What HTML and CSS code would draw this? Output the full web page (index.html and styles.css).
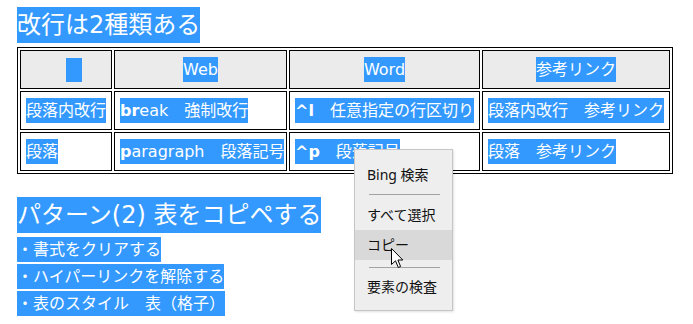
FILE: index.html
```html
<!DOCTYPE html>
<html lang="ja">
<head>
<meta charset="utf-8">
<link rel="stylesheet" href="styles.css">
</head>
<body>
<div class="page">
  <h1 class="title"><span class="sel">改行は2種類ある</span></h1>
  <table class="grid">
    <tr>
      <th class="c1"><span class="sel blank"></span></th>
      <th class="c2"><span class="sel">Web</span></th>
      <th class="c3"><span class="sel">Word</span></th>
      <th class="c4"><span class="sel">参考リンク</span></th>
    </tr>
    <tr>
      <td><span class="sel">段落内改行</span></td>
      <td><span class="sel"><b>br</b>eak　強制改行</span></td>
      <td><span class="sel"><b>^l</b>　任意指定の行区切り</span></td>
      <td><span class="sel">段落内改行　参考リンク</span></td>
    </tr>
    <tr>
      <td><span class="sel">段落</span></td>
      <td><span class="sel"><b>p</b>aragraph　段落記号</span></td>
      <td><span class="sel"><b>^p</b>　段落記号</span></td>
      <td><span class="sel">段落　参考リンク</span></td>
    </tr>
  </table>
  <h2 class="title title2"><span class="sel">パターン(2) 表をコピペする</span></h2>
  <ul class="steps">
    <li><span class="sel">・書式をクリアする</span></li>
    <li><span class="sel">・ハイパーリンクを解除する</span></li>
    <li><span class="sel">・表のスタイル　表（格子）</span></li>
  </ul>
</div>
<div class="menu">
  <div class="item">Bing 検索</div>
  <div class="sep"></div>
  <div class="item">すべて選択</div>
  <div class="item hot">コピー</div>
  <div class="sep sep2"></div>
  <div class="item">要素の検査</div>
</div>
<svg class="cursor" width="13" height="21" viewBox="0 0 13 21"><path d="M0.5 0.5 V16.5 L4.5 12.8 L7.3 19.5 L9.6 18.5 L6.9 12 H11.8 Z" fill="#fff" stroke="#000" stroke-width="1" stroke-linejoin="miter"/></svg>
</body>
</html>
```
FILE: styles.css
```css
body {
  margin: 0;
  background: #fff;
  color: #000;
  font-family: "DejaVu Sans", "Noto Sans CJK JP", sans-serif;
}
.page {
  padding: 7px 0 0 17px;
}
.title {
  margin: 0;
  font-size: 24px;
  line-height: 36px;
  font-weight: normal;
}
.sel {
  background: #3399ff;
  color: #fff;
  padding: 3px 0;
}
.title .sel {
  padding: 4px 0;
}
.grid {
  margin-top: 4px;
  border: 1px solid #000;
  border-spacing: 2px;
  table-layout: fixed;
  width: 656px;
  font-size: 16px;
}
.grid td,
.grid th {
  border: 1px solid #000;
  height: 39px;
  box-sizing: border-box;
  padding: 0 4px 0 5px;
  vertical-align: middle;
  text-align: left;
  font-weight: normal;
  line-height: 24px;
  white-space: nowrap;
}
.grid th {
  background: #ebebeb;
  text-align: center;
  padding: 0;
}
.grid b {
  font-weight: bold;
}
.blank {
  display: inline-block;
  vertical-align: middle;
  width: 16px;
  height: 24px;
  padding: 0;
  margin-left: 16px;
}
.c1 { width: 92px; }
.c2 { width: 173px; }
.c3 { width: 191px; }
.c4 { width: 188px; }
.title2 {
  margin-top: 23px;
}
.steps {
  margin: 3px 0 0;
  padding: 0;
  list-style: none;
  font-size: 16px;
}
.steps li {
  line-height: 27px;
}
.menu {
  position: absolute;
  left: 354px;
  top: 149px;
  width: 99px;
  height: 162px;
  box-sizing: border-box;
  background: #eeeeee;
  border: 1px solid #c6c6c6;
  box-shadow: 1px 1px 2px rgba(0, 0, 0, 0.12);
  padding-top: 10px;
  font-family: "Noto Sans", "Noto Sans CJK JP", sans-serif;
  font-size: 14px;
  color: #111;
}
.item {
  height: 30px;
  line-height: 30px;
  padding-left: 12px;
}
.item.hot {
  background: #d9d9d9;
}
.sep {
  height: 1px;
  background: #a3a3a3;
  margin: 4px 12px 5px 14px;
}
.sep2 {
  margin: 7px 12px 4px 14px;
}
.cursor {
  position: absolute;
  left: 391px;
  top: 248px;
  z-index: 2;
}
```
